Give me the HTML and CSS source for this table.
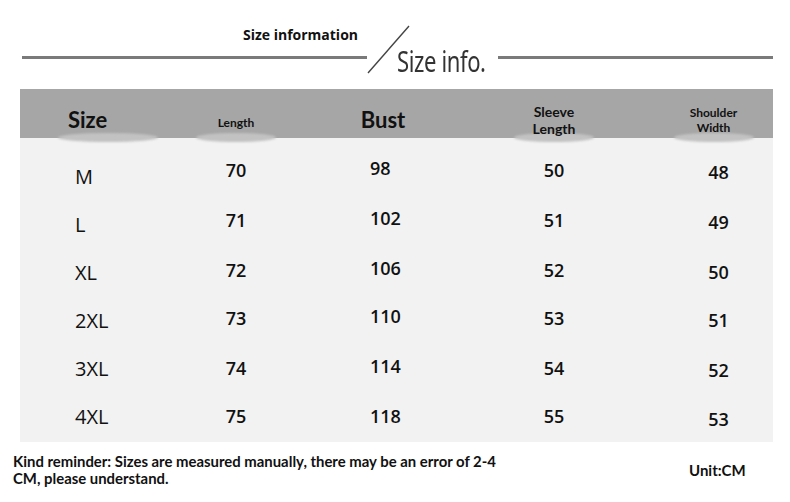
FILE: index.html
```html
<!DOCTYPE html>
<html>
<head>
<meta charset="utf-8">
<link rel="stylesheet" href="styles.css">
</head>
<body>
<div class="page">
  <div class="title">
    <div class="title-left">
      <div class="title-cn">Size information</div>
      <div class="rule"></div>
    </div>
    <svg class="slash" width="44" height="50" viewBox="0 0 44 50"><line x1="1" y1="48" x2="42" y2="1" stroke="#444" stroke-width="1.4"/></svg>
    <div class="title-en"><span>Size info.</span></div>
    <div class="rule rule-right"></div>
  </div>

  <div class="table">
    <div class="thead">
      <div class="th th-size"><span class="lbl big">Size</span></div>
      <div class="th th-len"><span class="lbl small">Length</span></div>
      <div class="th th-bust"><span class="lbl big">Bust</span></div>
      <div class="th th-sleeve"><span class="lbl mid">Sleeve<br>Length</span></div>
      <div class="th th-shoulder"><span class="lbl small">Shoulder<br>Width</span></div>
    </div>
    <div class="tbody">
      <div class="row"><div class="c c1">M</div><div class="c c2">70</div><div class="c c3">98</div><div class="c c4">50</div><div class="c c5">48</div></div>
      <div class="row"><div class="c c1">L</div><div class="c c2">71</div><div class="c c3">102</div><div class="c c4">51</div><div class="c c5">49</div></div>
      <div class="row"><div class="c c1">XL</div><div class="c c2">72</div><div class="c c3">106</div><div class="c c4">52</div><div class="c c5">50</div></div>
      <div class="row"><div class="c c1">2XL</div><div class="c c2">73</div><div class="c c3">110</div><div class="c c4">53</div><div class="c c5">51</div></div>
      <div class="row"><div class="c c1">3XL</div><div class="c c2">74</div><div class="c c3">114</div><div class="c c4">54</div><div class="c c5">52</div></div>
      <div class="row"><div class="c c1">4XL</div><div class="c c2">75</div><div class="c c3">118</div><div class="c c4">55</div><div class="c c5">53</div></div>
    </div>
  </div>

  <div class="footer">
    <div class="note">Kind reminder: Sizes are measured manually, there may be an error of 2-4<br>CM, please understand.</div>
    <div class="unit">Unit:CM</div>
  </div>
</div>
</body>
</html>
```

FILE: styles.css
```css
* { box-sizing: border-box; }
html, body { margin: 0; padding: 0; background: #fff; }
.page {
  width: 790px;
  height: 502px;
  overflow: hidden;
  color: #111;
  font-family: "Open Sans", "Noto Sans", sans-serif;
}

/* title */
.title {
  height: 89px;
  display: flex;
  align-items: flex-start;
  padding-left: 22px;
  padding-right: 17px;
}
.title-left {
  width: 345px;
  display: flex;
  flex-direction: column;
}
.title-cn {
  margin-top: 26px;
  height: 30px;
  text-align: right;
  padding-right: 9px;
  font-size: 14px;
  font-weight: 700;
  line-height: 18px;
  color: #111;
}
.rule {
  height: 3px;
  background: #7a7a7a;
}
.rule-right {
  flex: 1;
  margin-top: 56px;
}
.slash {
  margin-top: 25px;
  flex: none;
}
.title-en {
  margin-top: 41px;
  margin-left: -14px;
  width: 101px;
  height: 40px;
  font-family: "Noto Sans", sans-serif;
  font-size: 29px;
  line-height: 40px;
  color: #333;
  white-space: nowrap;
}
.title-en span {
  display: inline-block;
  transform: scaleX(0.76);
  transform-origin: left center;
  letter-spacing: -0.5px;
}

/* table */
.table {
  margin-left: 20px;
  width: 753px;
}
.thead, .row {
  display: grid;
  grid-template-columns: 140px 152px 142px 200px 119px;
}
.thead {
  height: 49px;
  background: #a6a6a6;
  font-family: "Lato", "Open Sans", sans-serif;
  font-weight: 700;
  color: #111;
}
.th {
  display: flex;
  align-items: center;
  justify-content: center;
  position: relative;
  text-align: center;
}
.lbl { position: relative; z-index: 1; }
.th::after {
  content: "";
  position: absolute;
  bottom: -4px;
  left: 50%;
  width: 80px;
  height: 9px;
  margin-left: -40px;
  background: #c2c2c2;
  border-radius: 50%;
  filter: blur(1px);
  z-index: 0;
}
.th-size { justify-content: flex-start; padding-left: 48px; padding-top: 12px; }
.th-size::after { left: 88px; width: 100px; margin-left: -50px; }
.th-len { padding-top: 18px; }
.th-bust::after { display: none; }
.th-bust { padding-top: 12px; }
.th-sleeve { padding-top: 12px; }
.th-shoulder { padding-top: 13px; }
.big { font-size: 22px; line-height: 26px; }
.mid { font-size: 14px; line-height: 17px; font-weight: 700; }
.small { font-size: 12px; line-height: 15px; }

.tbody {
  background: #f2f2f2;
  padding-top: 14px;
  padding-bottom: 2px;
}
.row { height: 48px; --o: 0px; }
.row:nth-child(1) { --o: 12px; }
.row:nth-child(2) { --o: 8px; }
.row:nth-child(3) { --o: 4px; }
.row:nth-child(4) { --o: 4px; }
.c {
  display: flex;
  align-items: center;
  font-size: 18px;
  font-weight: 600;
}
.c1 {
  padding-left: 55px;
  font-weight: 400;
  font-size: 20px;
}
.c2, .c4 { justify-content: center; padding-bottom: var(--o); }
.c3 { padding-left: 58px; padding-bottom: calc(var(--o) + 4px); }
.c5 {
  justify-content: center;
  padding-left: 10px;
  padding-bottom: max(0px, calc(var(--o) - 4px));
  padding-top: max(0px, calc(4px - var(--o)));
}
.row:nth-child(6) .c3 { padding-bottom: 0; }
.row:nth-child(6) .c5 { padding-top: 6px; }

/* footer */
.footer {
  display: flex;
  align-items: flex-start;
  padding-top: 11px;
  padding-left: 13px;
}
.note {
  width: 676px;
  font-family: "Lato", sans-serif;
  font-size: 14.9px;
  font-weight: 700;
  line-height: 17px;
  white-space: nowrap;
}
.unit {
  margin-top: 9px;
  font-family: "Lato", sans-serif;
  font-size: 15px;
  font-weight: 700;
  line-height: 16px;
  white-space: nowrap;
}
```
